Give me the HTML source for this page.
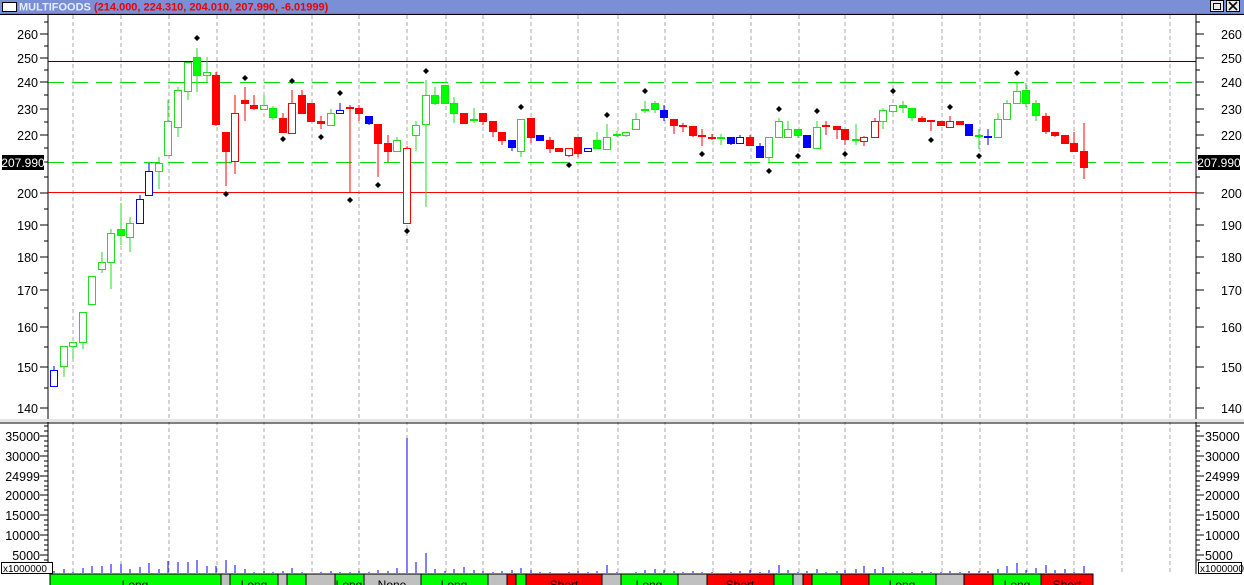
<!DOCTYPE html>
<html><head><meta charset="utf-8"><style>
html,body{margin:0;padding:0;background:#fff;width:1244px;height:585px;overflow:hidden}
svg{display:block;font-family:"Liberation Sans",sans-serif}
.g{fill:#fff;stroke:#22dd22}.G{fill:#00ff00;stroke:#00ee00}
.r{fill:#fff;stroke:#ff0000}.R{fill:#ff0000;stroke:#ff0000}
.b{fill:#fff;stroke:#0000ff}.B{fill:#0000ff;stroke:#0000ff}
line.g,line.G{stroke:#22dd22}line.r,line.R{stroke:#ff0000}line.b,line.B{stroke:#0000ff}
.lab{font-size:12.5px;fill:#000}
.st{font-size:12px;fill:#000}
</style></head><body>
<svg width="1244" height="585" viewBox="0 0 1244 585" shape-rendering="crispEdges">
<!-- title bar -->
<rect x="0" y="0" width="1244" height="13" fill="#7b8fd6"/>
<rect x="2.5" y="2.5" width="14" height="9" fill="#fff" stroke="#000"/>
<text x="19" y="10.5" font-size="11" font-weight="bold" fill="#e4ecff">MULTIFOODS</text>
<text x="94" y="10.5" font-size="11" font-weight="bold" fill="#ee0000">(214.000, 224.310, 204.010, 207.990, -6.01999)</text>
<rect x="1210.5" y="0.5" width="13" height="11" fill="#e8e8e8" stroke="#000"/>
<rect x="1213.5" y="3.5" width="7" height="6" fill="none" stroke="#000"/>
<rect x="1226.5" y="0.5" width="13" height="11" fill="#e8e8e8" stroke="#000"/>
<path d="M1229 2 L1237 10 M1237 2 L1229 10" stroke="#000" stroke-width="1.6" shape-rendering="auto"/>
<line x1="0" y1="14" x2="1244" y2="14" stroke="#000" stroke-width="1.5"/>

<!-- grid -->
<g stroke="#a8a8a8" stroke-dasharray="4,3">
<line x1="73" y1="15" x2="73" y2="573"/><line x1="121" y1="15" x2="121" y2="573"/><line x1="169" y1="15" x2="169" y2="573"/><line x1="217" y1="15" x2="217" y2="573"/><line x1="264" y1="15" x2="264" y2="573"/><line x1="312" y1="15" x2="312" y2="573"/><line x1="359" y1="15" x2="359" y2="573"/><line x1="407" y1="15" x2="407" y2="573"/><line x1="446" y1="15" x2="446" y2="573"/><line x1="483" y1="15" x2="483" y2="573"/><line x1="531" y1="15" x2="531" y2="573"/><line x1="578" y1="15" x2="578" y2="573"/><line x1="618" y1="15" x2="618" y2="573"/><line x1="665" y1="15" x2="665" y2="573"/><line x1="713" y1="15" x2="713" y2="573"/><line x1="751" y1="15" x2="751" y2="573"/><line x1="799" y1="15" x2="799" y2="573"/><line x1="845" y1="15" x2="845" y2="573"/><line x1="893" y1="15" x2="893" y2="573"/><line x1="942" y1="15" x2="942" y2="573"/><line x1="980" y1="15" x2="980" y2="573"/><line x1="1027" y1="15" x2="1027" y2="573"/><line x1="1074" y1="15" x2="1074" y2="573"/><line x1="1122" y1="15" x2="1122" y2="573"/><line x1="1170" y1="15" x2="1170" y2="573"/>
</g>

<!-- horizontal lines -->
<line x1="48" y1="61.5" x2="1196" y2="61.5" stroke="#0000aa" stroke-width="1.2"/>
<line x1="48" y1="82.5" x2="1196" y2="82.5" stroke="#00dd00" stroke-width="1.2" stroke-dasharray="16,8"/>
<line x1="48" y1="162.5" x2="1196" y2="162.5" stroke="#00dd00" stroke-width="1.2" stroke-dasharray="16,8"/>
<line x1="48" y1="192.5" x2="1196" y2="192.5" stroke="#ff0000" stroke-width="1.2"/>

<!-- axes -->
<line x1="48" y1="14" x2="48" y2="574" stroke="#000"/>
<line x1="1196" y1="14" x2="1196" y2="574" stroke="#000"/>
<rect x="0" y="419" width="1244" height="3" fill="#e4e4e4"/>
<line x1="0" y1="423" x2="1244" y2="423" stroke="#000"/>

<!-- price ticks -->
<g stroke="#000">
<path d="M40 34H48M40 58H48M40 82H48M40 109H48M40 135H48M40 162H48M40 193H48M40 225H48M40 257H48M40 290H48M40 327H48M40 367H48M40 408H48"/>
<path d="M44 22H48M44 46H48M44 70H48M44 95H48M44 122H48M44 148H48M44 177H48M44 209H48M44 241H48M44 273H48M44 308H48M44 347H48M44 388H48"/>
<path d="M1196 34H1204M1196 58H1204M1196 82H1204M1196 109H1204M1196 135H1204M1196 162H1204M1196 193H1204M1196 225H1204M1196 257H1204M1196 290H1204M1196 327H1204M1196 367H1204M1196 408H1204"/>
<path d="M1196 22H1200M1196 46H1200M1196 70H1200M1196 95H1200M1196 122H1200M1196 148H1200M1196 177H1200M1196 209H1200M1196 241H1200M1196 273H1200M1196 308H1200M1196 347H1200M1196 388H1200"/>
</g>
<g class="lab" text-anchor="end">
<text x="38" y="39">260</text><text x="38" y="63">250</text><text x="38" y="87">240</text><text x="38" y="114">230</text><text x="38" y="140">220</text><text x="38" y="198">200</text><text x="38" y="230">190</text><text x="38" y="262">180</text><text x="38" y="295">170</text><text x="38" y="332">160</text><text x="38" y="372">150</text><text x="38" y="413">140</text>
</g>
<g class="lab">
<text x="1221" y="39">260</text><text x="1221" y="63">250</text><text x="1221" y="87">240</text><text x="1221" y="114">230</text><text x="1221" y="140">220</text><text x="1221" y="198">200</text><text x="1221" y="230">190</text><text x="1221" y="262">180</text><text x="1221" y="295">170</text><text x="1221" y="332">160</text><text x="1221" y="372">150</text><text x="1221" y="413">140</text>
</g>
<rect x="2" y="155" width="42" height="15" fill="#000"/>
<text x="23" y="167" font-size="12" fill="#fff" text-anchor="middle">207.990</text>
<rect x="1198" y="155" width="42" height="15" fill="#000"/>
<text x="1219" y="167" font-size="12" fill="#fff" text-anchor="middle">207.990</text>

<!-- volume axis -->
<g stroke="#000">
<path d="M40 436H48M40 456H48M40 476H48M40 495H48M40 515H48M40 535H48M40 555H48"/>
<path d="M44 426H48M44 431H48M44 441H48M44 446H48M44 451H48M44 461H48M44 466H48M44 471H48M44 481H48M44 486H48M44 490H48M44 500H48M44 505H48M44 510H48M44 520H48M44 525H48M44 530H48M44 540H48M44 545H48M44 550H48M44 560H48"/>
<path d="M1196 436H1204M1196 456H1204M1196 476H1204M1196 495H1204M1196 515H1204M1196 535H1204M1196 555H1204"/>
<path d="M1196 426H1200M1196 431H1200M1196 441H1200M1196 446H1200M1196 451H1200M1196 461H1200M1196 466H1200M1196 471H1200M1196 481H1200M1196 486H1200M1196 490H1200M1196 500H1200M1196 505H1200M1196 510H1200M1196 520H1200M1196 525H1200M1196 530H1200M1196 540H1200M1196 545H1200M1196 550H1200M1196 560H1200"/>
</g>
<g class="lab" text-anchor="end">
<text x="40" y="441">35000</text><text x="40" y="461">30000</text><text x="40" y="481">24999</text><text x="40" y="500">20000</text><text x="40" y="520">15000</text><text x="40" y="540">10000</text><text x="40" y="560">5000</text>
</g>
<g class="lab">
<text x="1205" y="441">35000</text><text x="1205" y="461">30000</text><text x="1205" y="481">24999</text><text x="1205" y="500">20000</text><text x="1205" y="520">15000</text><text x="1205" y="540">10000</text><text x="1205" y="560">5000</text>
</g>
<rect x="1.5" y="562.5" width="51" height="11" fill="#fff" stroke="#000"/>
<text x="3" y="572" font-size="10" fill="#000">x1000000</text>
<rect x="1198.5" y="562.5" width="43" height="11" fill="#fff" stroke="#000"/>
<text x="1200" y="572" font-size="10" fill="#000">x1000000</text>

<!-- volume bars -->
<g stroke="#0000ff">
<path d="M54 573V571M64 573V569M73 573V572M83 573V568M92 573V566M102 573V566M111 573V564M121 573V564M130 573V569M140 573V567M149 573V563M159 573V569M168 573V561M178 573V562M188 573V562M197 573V560M207 573V566M216 573V566M226 573V560M235 573V565M245 573V569M254 573V572M264 573V571M273 573V572M283 573V571M292 573V568M302 573V572M311 573V573M321 573V572M331 573V571M340 573V572M350 573V572M359 573V571M369 573V572M378 573V570M388 573V571M397 573V568M407 573V438M416 573V562M426 573V553M435 573V569M445 573V571M454 573V569M464 573V567M474 573V570M483 573V571M493 573V572M502 573V571M512 573V570M521 573V568M531 573V570M540 573V572M550 573V572M559 573V573M569 573V572M578 573V571M588 573V572M597 573V571M607 573V565M617 573V572M626 573V573M636 573V572M645 573V570M655 573V569M664 573V570M674 573V571M683 573V572M693 573V571M702 573V572M712 573V572M721 573V573M731 573V572M740 573V571M750 573V570M760 573V572M769 573V570M779 573V565M788 573V570M798 573V572M807 573V571M817 573V569M826 573V572M837 573V571M845 573V570M856 573V569M864 573V566M875 573V569M883 573V567M893 573V571M903 573V572M912 573V572M922 573V571M931 573V572M941 573V572M950 573V571M960 573V572M969 573V571M979 573V571M988 573V571M998 573V569M1007 573V566M1017 573V563M1026 573V570M1036 573V568M1046 573V565M1055 573V570M1065 573V569M1074 573V572M1084 573V566"/>
</g>

<!-- candles -->
<g id="c">
<line class="b" x1="54" y1="366" x2="54" y2="387"/><rect class="b" x="50.5" y="370.5" width="7" height="16"/>
<line class="g" x1="64" y1="346" x2="64" y2="377"/><rect class="g" x="60.5" y="346.5" width="7" height="20"/>
<line class="g" x1="73" y1="342" x2="73" y2="359"/><rect class="g" x="69.5" y="342.5" width="7" height="4"/>
<line class="g" x1="83" y1="312" x2="83" y2="349"/><rect class="g" x="79.5" y="312.5" width="7" height="30"/>
<rect class="g" x="88.5" y="276.5" width="7" height="28"/>
<line class="g" x1="102" y1="252" x2="102" y2="273"/><rect class="g" x="98.5" y="262.5" width="7" height="7"/>
<line class="g" x1="111" y1="229" x2="111" y2="289"/><rect class="g" x="107.5" y="233.5" width="7" height="29"/>
<line class="G" x1="121" y1="203" x2="121" y2="245"/><rect class="G" x="117.5" y="229.5" width="7" height="6"/>
<line class="g" x1="130" y1="217" x2="130" y2="252"/><rect class="g" x="126.5" y="223.5" width="7" height="14"/>
<line class="b" x1="140" y1="195" x2="140" y2="223"/><rect class="b" x="136.5" y="199.5" width="7" height="24"/>
<line class="b" x1="149" y1="163" x2="149" y2="195"/><rect class="b" x="145.5" y="171.5" width="7" height="24"/>
<line class="g" x1="159" y1="157" x2="159" y2="189"/><rect class="g" x="155.5" y="163.5" width="7" height="8"/>
<line class="g" x1="168" y1="100" x2="168" y2="155"/><rect class="g" x="164.5" y="121.5" width="7" height="34"/>
<line class="g" x1="178" y1="87" x2="178" y2="137"/><rect class="g" x="174.5" y="90.5" width="7" height="37"/>
<line class="g" x1="188" y1="62" x2="188" y2="100"/><rect class="g" x="184.5" y="62.5" width="7" height="29"/>
<line class="G" x1="197" y1="48" x2="197" y2="92"/><rect class="G" x="193.5" y="57.5" width="7" height="18"/>
<line class="g" x1="207" y1="57" x2="207" y2="82"/><rect class="g" x="203.5" y="72.5" width="7" height="3"/>
<line class="R" x1="216" y1="72" x2="216" y2="126"/><rect class="R" x="212.5" y="75.5" width="7" height="49"/>
<line class="R" x1="226" y1="132" x2="226" y2="186"/><rect class="R" x="222.5" y="132.5" width="7" height="19"/>
<line class="r" x1="235" y1="95" x2="235" y2="174"/><rect class="r" x="231.5" y="113.5" width="7" height="48"/>
<line class="R" x1="245" y1="87" x2="245" y2="121"/><rect class="R" x="241.5" y="100.5" width="7" height="3"/>
<line class="R" x1="254" y1="95" x2="254" y2="110"/><rect class="R" x="250.5" y="105.5" width="7" height="3"/>
<line class="g" x1="264" y1="95" x2="264" y2="109"/><rect class="g" x="260.5" y="105.5" width="7" height="4"/>
<line class="G" x1="273" y1="106" x2="273" y2="120"/><rect class="G" x="269.5" y="108.5" width="7" height="9"/>
<line class="R" x1="283" y1="113" x2="283" y2="132"/><rect class="R" x="279.5" y="118.5" width="7" height="14"/>
<line class="r" x1="292" y1="90" x2="292" y2="133"/><rect class="r" x="288.5" y="103.5" width="7" height="30"/>
<line class="R" x1="302" y1="90" x2="302" y2="113"/><rect class="R" x="298.5" y="95.5" width="7" height="18"/>
<rect class="R" x="307.5" y="103.5" width="7" height="18"/>
<line class="R" x1="321" y1="116" x2="321" y2="129"/><rect class="R" x="317.5" y="121.5" width="7" height="2"/>
<line class="g" x1="331" y1="109" x2="331" y2="125"/><rect class="g" x="327.5" y="113.5" width="7" height="12"/>
<line class="b" x1="340" y1="103" x2="340" y2="113"/><rect class="b" x="336.5" y="110.5" width="7" height="3"/>
<line class="R" x1="350" y1="105" x2="350" y2="192"/><rect class="R" x="346.5" y="107.5" width="7" height="1"/>
<line class="R" x1="359" y1="105" x2="359" y2="121"/><rect class="R" x="355.5" y="108.5" width="7" height="5"/>
<line class="B" x1="369" y1="116" x2="369" y2="125"/><rect class="B" x="365.5" y="116.5" width="7" height="7"/>
<line class="R" x1="378" y1="124" x2="378" y2="177"/><rect class="R" x="374.5" y="124.5" width="7" height="19"/>
<line class="R" x1="388" y1="135" x2="388" y2="162"/><rect class="R" x="384.5" y="143.5" width="7" height="8"/>
<line class="g" x1="397" y1="137" x2="397" y2="151"/><rect class="g" x="393.5" y="140.5" width="7" height="11"/>
<line class="r" x1="407" y1="146" x2="407" y2="223"/><rect class="r" x="403.5" y="148.5" width="7" height="75"/>
<line class="g" x1="416" y1="121" x2="416" y2="151"/><rect class="g" x="412.5" y="125.5" width="7" height="10"/>
<line class="g" x1="426" y1="80" x2="426" y2="207"/><rect class="g" x="422.5" y="95.5" width="7" height="29"/>
<line class="G" x1="435" y1="87" x2="435" y2="105"/><rect class="G" x="431.5" y="95.5" width="7" height="8"/>
<rect class="G" x="441.5" y="85.5" width="7" height="18"/>
<line class="G" x1="454" y1="97" x2="454" y2="123"/><rect class="G" x="450.5" y="103.5" width="7" height="10"/>
<rect class="R" x="460.5" y="113.5" width="7" height="10"/>
<line class="G" x1="474" y1="108" x2="474" y2="123"/><rect class="G" x="470.5" y="119.5" width="7" height="1"/>
<line class="R" x1="483" y1="113" x2="483" y2="125"/><rect class="R" x="479.5" y="113.5" width="7" height="8"/>
<line class="R" x1="493" y1="121" x2="493" y2="137"/><rect class="R" x="489.5" y="121.5" width="7" height="10"/>
<line class="R" x1="502" y1="132" x2="502" y2="145"/><rect class="R" x="498.5" y="132.5" width="7" height="8"/>
<line class="B" x1="512" y1="140" x2="512" y2="151"/><rect class="B" x="508.5" y="140.5" width="7" height="7"/>
<line class="g" x1="521" y1="119" x2="521" y2="157"/><rect class="g" x="517.5" y="119.5" width="7" height="32"/>
<line class="R" x1="531" y1="118" x2="531" y2="143"/><rect class="R" x="527.5" y="118.5" width="7" height="19"/>
<rect class="B" x="536.5" y="135.5" width="7" height="5"/>
<line class="R" x1="550" y1="137" x2="550" y2="153"/><rect class="R" x="546.5" y="140.5" width="7" height="8"/>
<rect class="R" x="555.5" y="148.5" width="7" height="3"/>
<line class="r" x1="569" y1="148" x2="569" y2="157"/><rect class="r" x="565.5" y="148.5" width="7" height="7"/>
<line class="R" x1="578" y1="137" x2="578" y2="157"/><rect class="R" x="574.5" y="137.5" width="7" height="16"/>
<rect class="b" x="584.5" y="148.5" width="7" height="3"/>
<line class="G" x1="597" y1="132" x2="597" y2="148"/><rect class="G" x="593.5" y="140.5" width="7" height="8"/>
<line class="g" x1="607" y1="124" x2="607" y2="149"/><rect class="g" x="603.5" y="137.5" width="7" height="12"/>
<line class="G" x1="617" y1="131" x2="617" y2="137"/><rect class="G" x="613.5" y="134.5" width="7" height="1"/>
<line class="g" x1="626" y1="132" x2="626" y2="137"/><rect class="g" x="622.5" y="132.5" width="7" height="3"/>
<line class="g" x1="636" y1="113" x2="636" y2="129"/><rect class="g" x="632.5" y="119.5" width="7" height="10"/>
<line class="G" x1="645" y1="101" x2="645" y2="113"/><rect class="G" x="641.5" y="109.5" width="7" height="1"/>
<line class="G" x1="655" y1="101" x2="655" y2="113"/><rect class="G" x="651.5" y="103.5" width="7" height="6"/>
<line class="B" x1="664" y1="105" x2="664" y2="121"/><rect class="B" x="660.5" y="110.5" width="7" height="7"/>
<line class="R" x1="674" y1="119" x2="674" y2="134"/><rect class="R" x="670.5" y="119.5" width="7" height="6"/>
<line class="R" x1="683" y1="123" x2="683" y2="132"/><rect class="R" x="679.5" y="125.5" width="7" height="1"/>
<line class="R" x1="693" y1="126" x2="693" y2="137"/><rect class="R" x="689.5" y="126.5" width="7" height="9"/>
<line class="R" x1="702" y1="129" x2="702" y2="146"/><rect class="R" x="698.5" y="135.5" width="7" height="1"/>
<line class="R" x1="712" y1="134" x2="712" y2="140"/><rect class="R" x="708.5" y="137.5" width="7" height="1"/>
<line class="G" x1="721" y1="134" x2="721" y2="145"/><rect class="G" x="717.5" y="137.5" width="7" height="1"/>
<line class="B" x1="731" y1="137" x2="731" y2="145"/><rect class="B" x="727.5" y="137.5" width="7" height="6"/>
<line class="b" x1="740" y1="135" x2="740" y2="143"/><rect class="b" x="736.5" y="137.5" width="7" height="6"/>
<line class="R" x1="750" y1="135" x2="750" y2="145"/><rect class="R" x="746.5" y="137.5" width="7" height="8"/>
<line class="B" x1="760" y1="143" x2="760" y2="157"/><rect class="B" x="756.5" y="146.5" width="7" height="11"/>
<line class="g" x1="769" y1="137" x2="769" y2="162"/><rect class="g" x="765.5" y="137.5" width="7" height="20"/>
<line class="g" x1="779" y1="118" x2="779" y2="137"/><rect class="g" x="775.5" y="121.5" width="7" height="16"/>
<line class="g" x1="788" y1="121" x2="788" y2="138"/><rect class="g" x="784.5" y="129.5" width="7" height="8"/>
<line class="G" x1="798" y1="129" x2="798" y2="138"/><rect class="G" x="794.5" y="129.5" width="7" height="6"/>
<rect class="B" x="803.5" y="135.5" width="7" height="12"/>
<line class="g" x1="817" y1="121" x2="817" y2="149"/><rect class="g" x="813.5" y="127.5" width="7" height="21"/>
<line class="R" x1="826" y1="121" x2="826" y2="135"/><rect class="R" x="822.5" y="125.5" width="7" height="1"/>
<line class="R" x1="837" y1="126" x2="837" y2="139"/><rect class="R" x="833.5" y="126.5" width="7" height="3"/>
<line class="R" x1="845" y1="129" x2="845" y2="145"/><rect class="R" x="841.5" y="129.5" width="7" height="10"/>
<line class="G" x1="856" y1="124" x2="856" y2="145"/><rect class="G" x="852.5" y="139.5" width="7" height="1"/>
<line class="r" x1="864" y1="136" x2="864" y2="146"/><rect class="r" x="860.5" y="137.5" width="7" height="4"/>
<line class="r" x1="875" y1="118" x2="875" y2="137"/><rect class="r" x="871.5" y="121.5" width="7" height="16"/>
<line class="g" x1="883" y1="108" x2="883" y2="129"/><rect class="g" x="879.5" y="110.5" width="7" height="11"/>
<line class="g" x1="893" y1="105" x2="893" y2="113"/><rect class="g" x="889.5" y="105.5" width="7" height="6"/>
<line class="G" x1="903" y1="101" x2="903" y2="113"/><rect class="G" x="899.5" y="105.5" width="7" height="2"/>
<line class="G" x1="912" y1="108" x2="912" y2="121"/><rect class="G" x="908.5" y="108.5" width="7" height="9"/>
<line class="R" x1="922" y1="116" x2="922" y2="121"/><rect class="R" x="918.5" y="118.5" width="7" height="3"/>
<line class="R" x1="931" y1="120" x2="931" y2="131"/><rect class="R" x="927.5" y="120.5" width="7" height="1"/>
<rect class="R" x="937.5" y="121.5" width="7" height="4"/>
<line class="r" x1="950" y1="116" x2="950" y2="127"/><rect class="r" x="946.5" y="121.5" width="7" height="6"/>
<line class="R" x1="960" y1="121" x2="960" y2="125"/><rect class="R" x="956.5" y="121.5" width="7" height="3"/>
<rect class="B" x="965.5" y="124.5" width="7" height="11"/>
<line class="G" x1="979" y1="129" x2="979" y2="149"/><rect class="G" x="975.5" y="135.5" width="7" height="1"/>
<line class="B" x1="988" y1="129" x2="988" y2="145"/><rect class="B" x="984.5" y="136.5" width="7" height="1"/>
<line class="g" x1="998" y1="113" x2="998" y2="137"/><rect class="g" x="994.5" y="119.5" width="7" height="18"/>
<line class="g" x1="1007" y1="100" x2="1007" y2="119"/><rect class="g" x="1003.5" y="103.5" width="7" height="16"/>
<line class="g" x1="1017" y1="83" x2="1017" y2="103"/><rect class="g" x="1013.5" y="91.5" width="7" height="12"/>
<line class="G" x1="1026" y1="83" x2="1026" y2="107"/><rect class="G" x="1022.5" y="90.5" width="7" height="13"/>
<line class="G" x1="1036" y1="100" x2="1036" y2="121"/><rect class="G" x="1032.5" y="103.5" width="7" height="12"/>
<line class="R" x1="1046" y1="113" x2="1046" y2="134"/><rect class="R" x="1042.5" y="116.5" width="7" height="15"/>
<line class="R" x1="1055" y1="132" x2="1055" y2="137"/><rect class="R" x="1051.5" y="132.5" width="7" height="3"/>
<rect class="R" x="1061.5" y="135.5" width="7" height="8"/>
<line class="R" x1="1074" y1="132" x2="1074" y2="151"/><rect class="R" x="1070.5" y="143.5" width="7" height="8"/>
<line class="R" x1="1084" y1="123" x2="1084" y2="179"/><rect class="R" x="1080.5" y="151.5" width="7" height="16"/>
</g>

<!-- diamonds -->
<path shape-rendering="auto" fill="#000" d="M197 35l3 3-3 3-3-3zM245 75l3 3-3 3-3-3zM292 78l3 3-3 3-3-3zM340 90l3 3-3 3-3-3zM426 68l3 3-3 3-3-3zM521 104l3 3-3 3-3-3zM607 112l3 3-3 3-3-3zM645 88l3 3-3 3-3-3zM779 106l3 3-3 3-3-3zM817 108l3 3-3 3-3-3zM893 88l3 3-3 3-3-3zM950 104l3 3-3 3-3-3zM1017 70l3 3-3 3-3-3zM226 191l3 3-3 3-3-3zM283 136l3 3-3 3-3-3zM321 134l3 3-3 3-3-3zM350 197l3 3-3 3-3-3zM378 182l3 3-3 3-3-3zM407 228l3 3-3 3-3-3zM569 162l3 3-3 3-3-3zM702 151l3 3-3 3-3-3zM769 168l3 3-3 3-3-3zM798 153l3 3-3 3-3-3zM845 151l3 3-3 3-3-3zM931 137l3 3-3 3-3-3zM979 153l3 3-3 3-3-3z"/>

<!-- signal strip -->
<g stroke="#000">
<rect x="50" y="574" width="171" height="12" fill="#00ff00"/>
<rect x="221" y="574" width="9" height="12" fill="#c0c0c0"/>
<rect x="230" y="574" width="48" height="12" fill="#00ff00"/>
<rect x="278" y="574" width="9" height="12" fill="#c0c0c0"/>
<rect x="287" y="574" width="19" height="12" fill="#00ff00"/>
<rect x="306" y="574" width="29" height="12" fill="#c0c0c0"/>
<rect x="335" y="574" width="29" height="12" fill="#00ff00"/>
<rect x="364" y="574" width="57" height="12" fill="#c0c0c0"/>
<rect x="421" y="574" width="67" height="12" fill="#00ff00"/>
<rect x="488" y="574" width="19" height="12" fill="#c0c0c0"/>
<rect x="507" y="574" width="9" height="12" fill="#ff0000"/>
<rect x="516" y="574" width="10" height="12" fill="#00ff00"/>
<rect x="526" y="574" width="76" height="12" fill="#ff0000"/>
<rect x="602" y="574" width="19" height="12" fill="#c0c0c0"/>
<rect x="621" y="574" width="57" height="12" fill="#00ff00"/>
<rect x="678" y="574" width="29" height="12" fill="#c0c0c0"/>
<rect x="707" y="574" width="67" height="12" fill="#ff0000"/>
<rect x="774" y="574" width="19" height="12" fill="#00ff00"/>
<rect x="793" y="574" width="10" height="12" fill="#c0c0c0"/>
<rect x="803" y="574" width="9" height="12" fill="#ff0000"/>
<rect x="812" y="574" width="29" height="12" fill="#00ff00"/>
<rect x="841" y="574" width="28" height="12" fill="#ff0000"/>
<rect x="869" y="574" width="67" height="12" fill="#00ff00"/>
<rect x="936" y="574" width="28" height="12" fill="#c0c0c0"/>
<rect x="964" y="574" width="29" height="12" fill="#ff0000"/>
<rect x="993" y="574" width="48" height="12" fill="#00ff00"/>
<rect x="1041" y="574" width="52" height="12" fill="#ff0000"/>
</g>
<g class="st" text-anchor="middle">
<text x="135" y="589">Long</text><text x="254" y="589">Long</text><text x="349" y="589">Long</text><text x="392" y="589">None</text><text x="454" y="589">Long</text><text x="564" y="589">Short</text><text x="649" y="589">Long</text><text x="740" y="589">Short</text><text x="902" y="589">Long</text><text x="1017" y="589">Long</text><text x="1067" y="589">Short</text>
</g>
</svg>
</body></html>
